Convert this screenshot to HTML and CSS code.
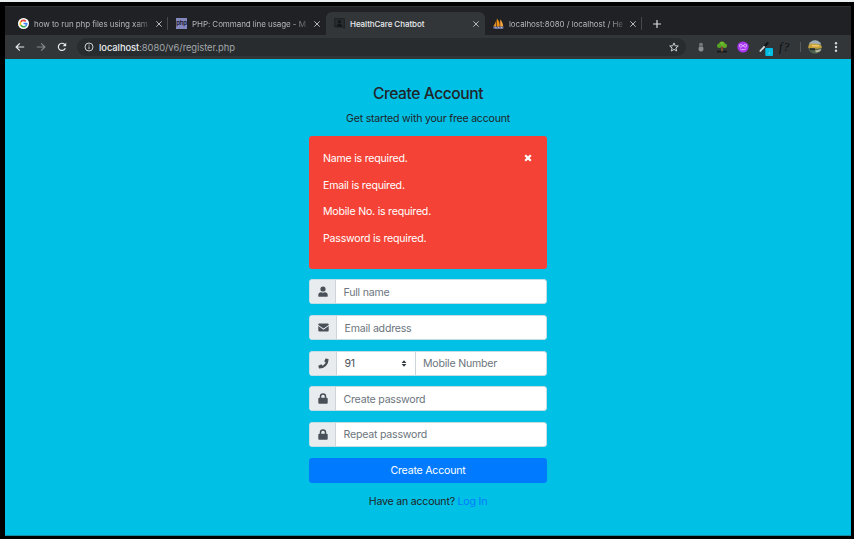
FILE: index.html
```html
<!DOCTYPE html>
<html lang="en">
<head>
<meta charset="utf-8">
<title>HealthCare Chatbot</title>
<link rel="stylesheet" href="styles.css">
</head>
<body>
<div class="window">
  <div class="tabs">
    <div class="tab t1">
      <svg class="fav" viewBox="0 0 24 24"><circle cx="12" cy="12" r="12" fill="#fff"/><g fill="none" stroke-width="3.6"><path d="M17 7.500A7 7 0 0 0 6 8.500" stroke="#ea4335"/><path d="M6 8.500a7 7 0 0 0 0 7" stroke="#fbbc05"/><path d="M6 15.500a7 7 0 0 0 10.500 2" stroke="#34a853"/><path d="M16.500 17.500A7 7 0 0 0 19 12h-7" stroke="#4285f4"/></g></svg>
      <span class="title">how to run php files using xam</span>
      <svg class="x" viewBox="0 0 8 8"><path d="M1.300 1.300l5.400 5.400M6.700 1.300L1.300 6.700"/></svg>
    </div>
    <div class="tab t2">
      <span class="fav php">php</span>
      <span class="title">PHP: Command line usage - M</span>
      <svg class="x" viewBox="0 0 8 8"><path d="M1.300 1.300l5.400 5.400M6.700 1.300L1.300 6.700"/></svg>
    </div>
    <div class="tab t3 active">
      <svg class="fav" viewBox="0 0 11 11"><path d="M.7.7h9.600v9.600L8.500 9H.7z" fill="#292d30" stroke="#1d2022"/><circle cx="5.500" cy="3.800" r="1.800" fill="#141719"/><path d="M2.500 8.800c0-4 6-4 6 0z" fill="#141719"/></svg>
      <span class="title">HealthCare Chatbot</span>
      <svg class="x" viewBox="0 0 8 8"><path d="M1.300 1.300l5.400 5.400M6.700 1.300L1.300 6.700"/></svg>
    </div>
    <div class="tab t4">
      <svg class="fav" viewBox="0 0 11 11"><path d="M3.300 1.500v7H.2C1.400 6.800 2.900 4.300 3.300 1.500z" fill="#e9951f"/><path d="M3.900.4C6 2.500 6.800 5 6.700 8.400H3.900z" fill="#f29111"/><path d="M7.200 1.400c2 1.800 2.800 4.200 3 7h-3z" fill="#f8a33b"/><path d="M.1 8.700h10.700l-.8 2H.6z" fill="#6c78af"/><path d="M2.300 8.500l1 2M5 8.500l1 2M8 8.500l1 2" stroke="#d1c9cc" stroke-width=".7"/></svg>
      <span class="title">localhost:8080 / localhost / He</span>
      <svg class="x" viewBox="0 0 8 8"><path d="M1.300 1.300l5.400 5.400M6.700 1.300L1.300 6.700"/></svg>
    </div>
    <svg class="plus" viewBox="0 0 8 8"><path d="M4 0v8M0 4h8"/></svg>
  </div>
  <div class="toolbar">
    <div class="nav">
      <svg viewBox="0 0 10 10"><path d="M9.200 5H1.200M4.800 1.300L1.100 5l3.700 3.700"/></svg>
      <svg class="dim" viewBox="0 0 10 10"><path d="M.8 5h8M5.200 1.300L8.900 5 5.200 8.700"/></svg>
      <svg viewBox="0 0 10 10"><path d="M8.300 6.200A3.600 3.600 0 1 1 7.600 2.400L8.400 3.300"/><path d="M9.200.7v3.500H5.700z" fill="#e8eaed" stroke="none"/></svg>
    </div>
    <div class="omnibox">
      <svg class="info" viewBox="0 0 10 10"><circle cx="5" cy="5" r="4"/><path d="M5 4.500v2.700M5 2.700v1"/></svg>
      <span class="url"><b>localhost</b>:8080/v6/register.php</span>
      <svg class="star" viewBox="0 0 10 10"><path d="M5 .9l1.200 2.900 3.100.2-2.400 2 .8 3L5 7.400 2.300 9l.8-3L.7 4l3.100-.2z"/></svg>
    </div>
    <div class="exts">
      <svg viewBox="0 0 12 12"><circle cx="6" cy="3.700" r="2" fill="#777b7d"/><rect x="3.600" y="5" width="4.800" height="5.600" rx="2" fill="#888c8e"/><path d="M4 5.200h4" stroke="#55595c"/></svg>
      <svg viewBox="0 0 12 12"><path d="M1 10.600h10" stroke="#16191b" stroke-width="1.700"/><circle cx="6" cy="3.300" r="2.800" fill="#6dbb2c"/><circle cx="3.300" cy="4.700" r="2.300" fill="#55a423"/><circle cx="8.700" cy="4.700" r="2.300" fill="#5fae25"/><path d="M6 5v5.500" stroke="#8b5a32" stroke-width="1.600"/></svg>
      <svg viewBox="0 0 12 12"><circle cx="6" cy="6" r="5.600" fill="#a834f0"/><g fill="none" stroke="#e4bdfb" stroke-width=".9"><rect x="2.500" y="3.500" width="2.700" height="2.500" rx=".8"/><rect x="6.800" y="3.500" width="2.700" height="2.500" rx=".8"/><path d="M5 4.700h2M3.200 7.800c1.300 1.300 4.300 1.300 5.600 0"/></g></svg>
      <svg class="picker" viewBox="0 0 14 15"><path d="M.8 10.500L6 4.900" stroke="#d5e3e8" stroke-width="1.700"/><path d="M5.600 5.300l3.600-3.800" stroke="#111416" stroke-width="2.300"/><rect x="6.300" y="7" width="7.700" height="8" rx="1" fill="#00bfe5"/><path d="M9.700 12.200h1.200" stroke="#a9e9f5"/></svg>
      <span class="fq">f?</span>
      <i class="rule"></i>
      <svg class="avatar" viewBox="0 0 14 14"><defs><clipPath id="av"><circle cx="7" cy="7" r="6.700"/></clipPath></defs><g clip-path="url(#av)"><rect width="14" height="14" fill="#526551"/><path d="M0 0h14v4.500H0z" fill="#9eafbb"/><path d="M0 5l3-1.600 6 .4 5 2V8l-5 .8L0 8z" fill="#c9a13a"/><path d="M4 5h7v1.500H4z" fill="#e9cb6c"/><path d="M2 8.200h5v2H2z" fill="#252d2c"/><path d="M7 10.500l7-1.500v2l-6 1.500z" fill="#b8b69a"/></g></svg>
      <svg class="dots" viewBox="0 0 4 12"><circle cx="2" cy="2.200" r="1.200"/><circle cx="2" cy="6" r="1.200"/><circle cx="2" cy="9.800" r="1.200"/></svg>
    </div>
  </div>
  <main class="page">
    <h1>Create Account</h1>
    <p class="sub">Get started with your free account</p>
    <div class="alert">
      <div class="messages"><p>Name is required.</p><p>Email is required.</p><p>Mobile No. is required.</p><p>Password is required.</p></div>
      <svg class="close" viewBox="0 0 8 8"><path d="M1.200 1.200l5.600 5.600M6.800 1.200L1.200 6.800"/></svg>
    </div>
    <form>
      <div class="field"><span class="icon"><svg viewBox="0 0 10 11"><circle cx="5" cy="3" r="2.600"/><path d="M.3 10.300V9c0-1.800 1.200-2.800 2.700-2.800 1.200.6 2.800.6 4 0 1.500 0 2.700 1 2.700 2.800v1.300q0 .4-.5.400H.8q-.5 0-.5-.4z"/></svg></span><span class="value">Full name</span></div>
      <div class="field wide"><span class="icon"><svg viewBox="0 0 11 11"><path d="M.3 2.500q0-1 1-1h8.400q1 0 1 1v.5L5.500 6.600.3 3z"/><path d="M.3 4.100l5.200 3.600 5.200-3.600v4.400q0 1-1 1H1.300q-1 0-1-1z"/></svg></span><span class="value">Email address</span></div>
      <div class="field wide"><span class="icon"><svg viewBox="0 0 11 11"><path d="M8 .4l2.200.5q.4.1.4.5A9.200 9.200 0 0 1 1.400 10.600q-.4 0-.5-.4L.4 8q-.1-.4.3-.6L3 6.400q.3-.1.600.1l1 1.200a7 7 0 0 0 3.100-3.100l-1.200-1q-.3-.3-.1-.6L7.400.7Q7.600.3 8 .4z"/></svg></span><span class="value code">91<svg class="arrows" viewBox="0 0 6 8"><path d="M.2 3.400L3 .2l2.800 3.200zM.2 4.600L3 7.800l2.800-3.200z"/></svg></span><span class="value">Mobile Number</span></div>
      <div class="field"><span class="icon"><svg viewBox="0 0 10 11"><path d="M2.500 5V3.400a2.500 2.500 0 0 1 5 0V5" fill="none" stroke="#495057" stroke-width="1.500"/><rect x=".3" y="4.700" width="9.400" height="6" rx="1"/></svg></span><span class="value">Create password</span></div>
      <div class="field"><span class="icon"><svg viewBox="0 0 10 11"><path d="M2.500 5V3.400a2.500 2.500 0 0 1 5 0V5" fill="none" stroke="#495057" stroke-width="1.500"/><rect x=".3" y="4.700" width="9.400" height="6" rx="1"/></svg></span><span class="value">Repeat password</span></div>
      <button type="button">Create Account</button>
    </form>
    <p class="login">Have an account? <a>Log In</a></p>
  </main>
</div>
</body>
</html>
```

FILE: styles.css
```css
* { box-sizing: border-box; }
body {
  margin: 0;
  height: 539px;
  overflow: hidden;
  background: #000;
  border-top: 2px solid #e9eeee;
  padding: 4px 3px 3px 5px;
  font-family: Inter, "Liberation Sans", sans-serif;
  font-size: 10.600px;
  letter-spacing: -.22px;
  color: #212529;
}
p, h1 { margin: 0; }
svg { display: block; flex: none; }
.window { height: 530px; display: flex; flex-direction: column; }

.tabs { height: 29px; display: flex; align-items: flex-end; padding-left: 5px; background: #202124; border-top: 1px solid #303234; letter-spacing: -.07px; }
.tab { height: 23px; display: flex; align-items: center; padding: 0 5px 0 8px; font-size: 8px; color: #b3b6b8; position: relative; }
.t1 { width: 158px; }
.t2 { width: 158px; }
.t3 { width: 159px; }
.t4 { width: 157px; }
.t1::after, .t4::after { content: ""; position: absolute; right: 0; top: 5px; height: 13px; width: 1px; background: #46494c; }
.tab.active { background: #323639; color: #e8eaed; border-radius: 6px 6px 0 0; font-weight: 500; }
.fav { width: 11px; height: 11px; flex: none; }
.php { background: #8588bd; color: #15172b; font-size: 6px; line-height: 10px; font-weight: 600; text-align: center; letter-spacing: -.3px; }
.title { flex: 1; margin: 0 4px 0 5px; white-space: nowrap; }
.tab:not(.active) .title { -webkit-mask-image: linear-gradient(90deg, #000 86%, rgba(0,0,0,.2)); mask-image: linear-gradient(90deg, #000 86%, rgba(0,0,0,.2)); }
.x { width: 8px; height: 8px; stroke: #b6b9bc; stroke-width: 1; }
.plus { width: 8px; height: 8px; margin: 0 0 7px 11px; stroke: #d8dadc; stroke-width: 1.200; }

.toolbar { height: 24px; display: flex; align-items: center; background: #323639; }
.nav { width: 72px; display: flex; gap: 11px; padding-left: 10px; }
.nav svg { width: 10px; height: 10px; fill: none; stroke: #e8eaed; stroke-width: 1.200; }
.nav .dim { stroke: #85898c; }
.omnibox { width: 609px; height: 18px; border-radius: 9px; background: #282c2f; display: flex; align-items: center; padding: 0 7px; }
.info, .star { width: 10px; height: 10px; fill: none; stroke: #cdd0d2; stroke-width: 1; }
.url { flex: 1; margin-left: 5px; font-size: 9.400px; letter-spacing: -.06px; color: #a4a8ab; }
.url b { color: #eceeef; font-weight: 500; }
.exts { flex: 1; display: flex; align-items: center; }
.exts svg { width: 12px; height: 12px; margin: 0 0 0 9px; }
.exts .picker { width: 14px; height: 15px; margin: 3px 0 0 10px; }
.fq { width: 13px; margin-left: 6px; font: italic 12px "Liberation Serif", serif; letter-spacing: 1px; color: #0b0e10; }
.rule { width: 1px; height: 10px; margin-left: 8px; background: #55595c; }
.exts .avatar { width: 14px; height: 14px; margin-left: 7px; }
.exts .dots { width: 4px; margin-left: 12px; fill: #d5d8da; }

.page { flex: 1; background: #00c0e5; border-bottom: 1px solid #178ba4; display: flex; flex-direction: column; align-items: center; padding-top: 25px; }
h1 { font-size: 15.600px; line-height: 20px; font-weight: 500; letter-spacing: -.43px; }
.sub { margin-top: 7px; line-height: 16px; }
.alert { width: 238px; height: 133px; margin: 9px 0 10.400px; border-radius: 3px; background: #f44336; color: #fff; display: flex; justify-content: space-between; padding: 15px 15px 0 14px; }
.messages p { line-height: 16px; margin-bottom: 10.500px; }
.close { width: 8px; height: 8px; margin-top: 3px; stroke: #fff; stroke-width: 2.200; }
form { width: 238px; display: grid; grid-auto-rows: 25px; gap: 10.650px; }
.field { display: flex; border: 1px solid #c4dce2; border-radius: 3px; background: #fff; overflow: hidden; color: #6c757d; }
.icon { width: 26px; display: flex; align-items: center; justify-content: center; background: #e9ecef; border-right: 1px solid #ced4da; }
.icon svg { width: 10px; height: 11px; fill: #495057; }
.wide .icon { width: 27px; }
.wide .icon svg { width: 11px; }
.value { flex: 1; display: flex; align-items: center; padding: 1px 0 0 7.500px; }
.value.code { flex: 0 0 78.500px; justify-content: space-between; padding-right: 8px; border-right: 1px solid #ced4da; color: #495057; }
.arrows { width: 6px; height: 7px; fill: #343a40; }
button { border: 0; border-radius: 3px; padding: 1px 0 0; background: #007bff; color: #fff; font: inherit; letter-spacing: inherit; }
.login { margin-top: 11.500px; line-height: 16px; }
.login a { color: #007bff; }
```
